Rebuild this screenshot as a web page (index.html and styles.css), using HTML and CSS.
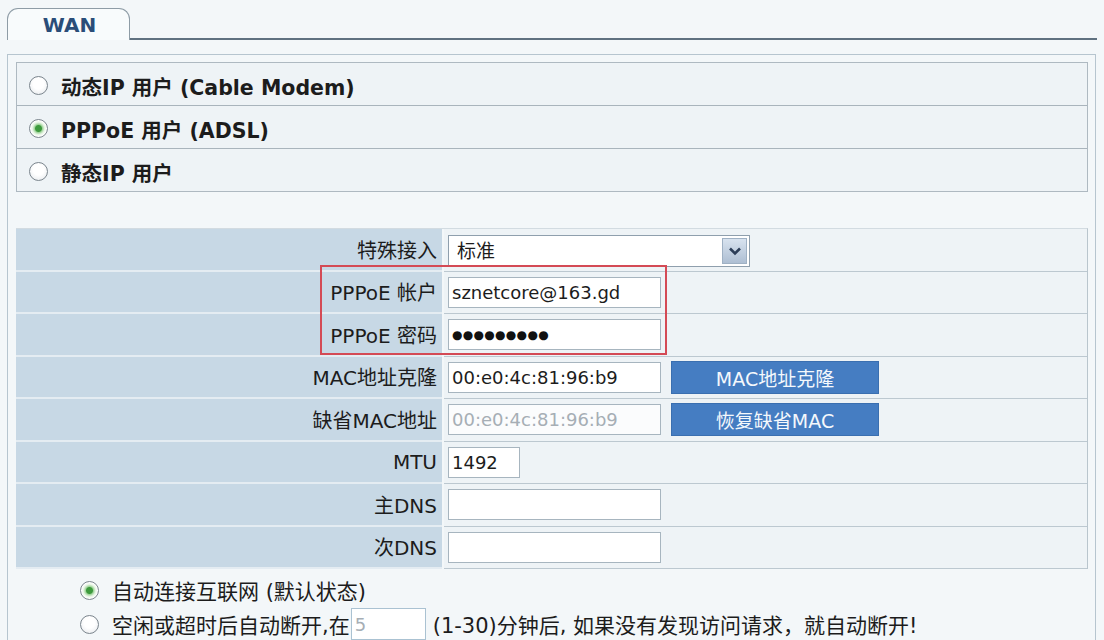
FILE: index.html
```html
<!DOCTYPE html>
<html lang="zh">
<head>
    <meta charset="UTF-8" />
    <title>WAN 设置</title>
    <link rel="stylesheet" href="styles.css">
</head>
<body>
    <!-- 标签栏 -->
    <div class="tabs">
        <div class="tab">WAN</div>
        <div class="tab-line"></div>
    </div>

    <div class="panel">
        <!-- 接入方式 -->
        <div class="mode-box">
            <label class="mode-row">
                <input type="radio" name="mode" class="radio" />
                动态IP 用户 (Cable Modem)
            </label>
            <label class="mode-row">
                <input type="radio" name="mode" class="radio" checked />
                PPPoE 用户 (ADSL)
            </label>
            <label class="mode-row">
                <input type="radio" name="mode" class="radio" />
                静态IP 用户
            </label>
        </div>

        <!-- PPPoE 参数 -->
        <div class="form-table">
            <div class="form-row">
                <div class="form-label">特殊接入</div>
                <div class="form-field">
                    <div class="select-wrap">
                        <select class="select">
                            <option>标准</option>
                        </select>
                        <span class="select-arrow">
                            <svg width="14" height="10" viewBox="0 0 14 10"><path d="M2 2.5 L7 7.5 L12 2.5" fill="none" stroke="#2c3e58" stroke-width="2.6" /></svg>
                        </span>
                    </div>
                </div>
            </div>
            <div class="form-row">
                <div class="form-label">PPPoE 帐户</div>
                <div class="form-field">
                    <input type="text" class="text-input" value="sznetcore@163.gd" />
                </div>
            </div>
            <div class="form-row">
                <div class="form-label">PPPoE 密码</div>
                <div class="form-field">
                    <input type="text" class="text-input pw" value="●●●●●●●●●" />
                </div>
            </div>
            <div class="form-row">
                <div class="form-label">MAC地址克隆</div>
                <div class="form-field">
                    <input type="text" class="text-input" value="00:e0:4c:81:96:b9" />
                    <button class="mac-btn">MAC地址克隆</button>
                </div>
            </div>
            <div class="form-row">
                <div class="form-label">缺省MAC地址</div>
                <div class="form-field">
                    <input type="text" class="text-input" value="00:e0:4c:81:96:b9" disabled />
                    <button class="mac-btn">恢复缺省MAC</button>
                </div>
            </div>
            <div class="form-row">
                <div class="form-label">MTU</div>
                <div class="form-field">
                    <input type="text" class="text-input short" value="1492" />
                </div>
            </div>
            <div class="form-row">
                <div class="form-label">主DNS</div>
                <div class="form-field">
                    <input type="text" class="text-input" value="" />
                </div>
            </div>
            <div class="form-row">
                <div class="form-label">次DNS</div>
                <div class="form-field">
                    <input type="text" class="text-input" value="" />
                </div>
            </div>
            <!-- 红框标注帐户和密码 -->
            <div class="mark-box"></div>
        </div>

        <!-- 连接方式 -->
        <div class="connect-opts">
            <label class="opt-row">
                <input type="radio" name="conn" class="radio" checked />
                自动连接互联网 (默认状态)
            </label>
            <label class="opt-row">
                <input type="radio" name="conn" class="radio" />
                空闲或超时后自动断开,在<input type="text" class="idle-input" value="5" />(1-30)分钟后, 如果没有发现访问请求，就自动断开!
            </label>
        </div>
    </div>
</body>
</html>
```

FILE: styles.css
```css
body {
    margin: 0;
    background: #f3f7f9;
    font-family: "DejaVu Sans", "Noto Sans CJK SC", sans-serif;
    color: #1c1c1c;
    font-size: 20px;
}
.tabs {
    display: flex;
    align-items: flex-end;
    padding: 8px 7px 0 7px;
}
.tab {
    width: 119px;
    height: 31px;
    border: 1px solid #8e9ca6;
    border-bottom: none;
    border-radius: 11px 11px 0 0;
    background: #f8fbfc;
    color: #2a4d78;
    font-weight: bold;
    font-size: 20px;
    display: flex;
    align-items: center;
    justify-content: center;
    padding-left: 2px;
}
.tab-line {
    flex: 1;
    border-bottom: 2px solid #5f7180;
}
.panel {
    margin: 14px 8px 0 7px;
    border: 1px solid #b6c5cf;
    border-bottom: none;
    padding: 7px 7px 0 8px;
    height: 600px;
}
/* 接入方式 */
.mode-box {
    border: 1px solid #aeb9c1;
    background: #eef3f6;
}
.mode-row {
    display: flex;
    align-items: center;
    height: 42px;
    padding-left: 12px;
    padding-top: 3px;
    box-sizing: border-box;
    gap: 13px;
    font-weight: bold;
    font-size: 20.5px;
}
.mode-row + .mode-row {
    border-top: 1px solid #a9b4bc;
    height: 43px;
}
.radio {
    appearance: none;
    -webkit-appearance: none;
    margin: 0;
    width: 19px;
    height: 19px;
    border-radius: 50%;
    border: 1px solid #7b858d;
    background: radial-gradient(circle at 50% 40%, #ffffff 40%, #e2e6ea 100%);
    flex: none;
}
.radio:checked {
    background: radial-gradient(circle, #3d9a3d 0 3px, #9fd49a 4px, #e6f4e3 6px, #ffffff 8px);
}
/* 参数表格 */
.form-table {
    position: relative;
    margin-top: 36px;
    border-top: 1px solid #d2dbe1;
    border-right: 1px solid #b9c5cd;
}
.form-row {
    display: grid;
    grid-template-columns: 426px 1fr;
    column-gap: 2px;
    height: 42.5px;
    box-sizing: border-box;
}
.form-label {
    background: #c7d8e5;
    border-bottom: 2px solid #e4ecf2;
    display: flex;
    align-items: center;
    justify-content: flex-end;
    padding-right: 5px;
}
.form-field {
    background: #eef3f6;
    border-bottom: 1px solid #bcc8d0;
    display: flex;
    align-items: center;
    padding-left: 4px;
    gap: 10px;
}
.text-input {
    width: 213px;
    height: 31px;
    box-sizing: border-box;
    border: 1px solid #a7b5bf;
    background: #fff;
    font-family: "DejaVu Sans", sans-serif;
    font-size: 18px;
    color: #1c1c1c;
    padding: 0 3px;
    margin: 0;
}
.text-input:disabled {
    color: #a6aeb5;
    background: #fbfcfd;
}
.text-input.short {
    width: 72px;
}
.text-input.pw {
    font-size: 12px;
    letter-spacing: 0.3px;
    color: #111;
}
.select-wrap {
    position: relative;
    width: 302px;
    height: 32px;
    margin-top: 2px;
}
.select {
    appearance: none;
    -webkit-appearance: none;
    width: 100%;
    height: 100%;
    border: 1px solid #8f9fad;
    background: #fff;
    font-family: "DejaVu Sans", "Noto Sans CJK SC", sans-serif;
    font-size: 19px;
    color: #1c1c1c;
    padding: 0 8px;
}
.select-arrow {
    position: absolute;
    top: 3px;
    right: 3px;
    width: 25px;
    height: 26px;
    border: 1px solid #9fb1c4;
    background: linear-gradient(#d8e3ef, #aebfd3);
    display: flex;
    align-items: center;
    justify-content: center;
    box-sizing: border-box;
}
.mac-btn {
    width: 208px;
    height: 33px;
    border: 1px solid #3a6fb0;
    background: #457dc2;
    color: #f4f8fc;
    font-family: "DejaVu Sans", "Noto Sans CJK SC", sans-serif;
    font-size: 19px;
    padding: 0;
}
.mark-box {
    position: absolute;
    left: 304px;
    top: 36px;
    width: 347px;
    height: 90px;
    border: 2px solid #d44a55;
    box-sizing: border-box;
}
/* 连接方式 */
.connect-opts {
    margin-top: 4px;
    font-size: 21px;
}
.opt-row {
    display: flex;
    align-items: center;
    height: 34px;
    padding-left: 64px;
}
.opt-row .radio {
    margin-right: 13px;
}
.idle-input {
    width: 75px;
    height: 32px;
    box-sizing: border-box;
    border: 1px solid #aac2d2;
    background: #fff;
    color: #a6aeb5;
    font-family: "DejaVu Sans", sans-serif;
    font-size: 18px;
    padding: 0 3px;
    margin: 0 7px 0 1px;
}
```
